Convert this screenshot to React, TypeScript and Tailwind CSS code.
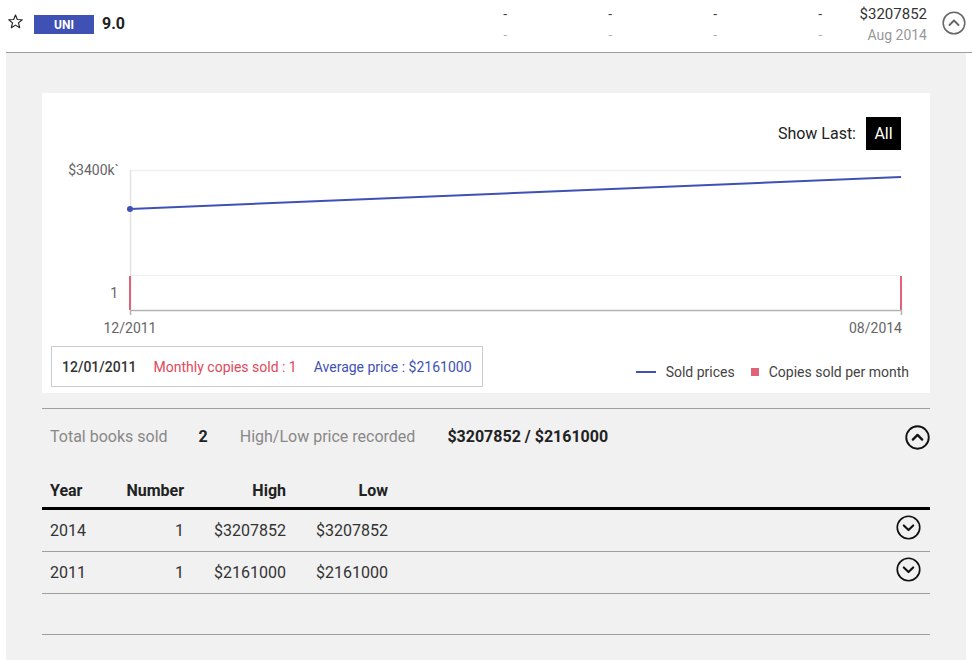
import React from "react";

function CircleChevron({ up, color = "#111", size = 24, stroke = 1.8 }: { up?: boolean; color?: string; size?: number; stroke?: number }) {
  return (
    <svg width={size} height={size} viewBox="0 0 24 24" fill="none">
      <circle cx="12" cy="12" r="10.8" stroke={color} strokeWidth={stroke} />
      {up ? (
        <path d="M7.5 14 L12 9.5 L16.5 14" stroke={color} strokeWidth={stroke + 0.4} strokeLinecap="round" strokeLinejoin="round" />
      ) : (
        <path d="M7.5 10 L12 14.5 L16.5 10" stroke={color} strokeWidth={stroke + 0.4} strokeLinecap="round" strokeLinejoin="round" />
      )}
    </svg>
  );
}

function Star() {
  return (
    <svg width="17" height="17" viewBox="0 0 24 24" fill="none">
      <path
        d="M12 2.8 L14.6 9.2 L21.5 9.6 L16.2 14 L17.9 20.8 L12 17.1 L6.1 20.8 L7.8 14 L2.5 9.6 L9.4 9.2 Z"
        stroke="#222"
        strokeWidth="1.6"
        strokeLinejoin="round"
      />
    </svg>
  );
}

function Chart() {
  return (
    <svg width="888" height="185" viewBox="0 0 888 185" className="block">
      <g fontFamily="Roboto, 'Liberation Sans', sans-serif" fontSize="14" fill="#666">
        <line x1="88" y1="15.5" x2="859" y2="15.5" stroke="#f0f0f0" strokeWidth="1.5" />
        <line x1="88" y1="120.5" x2="859" y2="120.5" stroke="#f0f0f0" strokeWidth="1" />
        <line x1="88.5" y1="15" x2="88.5" y2="155" stroke="#e2e2e2" strokeWidth="1.5" />
        <line x1="88" y1="54" x2="859" y2="22" stroke="#3f51b5" strokeWidth="2" />
        <circle cx="88" cy="54" r="3" fill="#3f51b5" />
        <line x1="88" y1="121" x2="88" y2="155" stroke="#e06377" strokeWidth="2" />
        <line x1="859" y1="121" x2="859" y2="155" stroke="#e06377" strokeWidth="2" />
        <line x1="88" y1="155.5" x2="860" y2="155.5" stroke="#b3b3b3" strokeWidth="1.5" />
        <line x1="88.5" y1="155" x2="88.5" y2="160" stroke="#b3b3b3" strokeWidth="1.5" />
        <line x1="859.5" y1="155" x2="859.5" y2="160" stroke="#b3b3b3" strokeWidth="1.5" />
        <text x="77" y="20" textAnchor="end">$3400k`</text>
        <text x="76" y="143" textAnchor="end">1</text>
        <text x="88" y="178" textAnchor="middle">12/2011</text>
        <text x="860" y="178" textAnchor="end">08/2014</text>
      </g>
    </svg>
  );
}

export default function App() {
  const font = { fontFamily: "Roboto, 'Liberation Sans', sans-serif" };
  return (
    <div className="w-[972px] h-[660px] bg-white overflow-hidden" style={font}>
      <div className="ml-[6px] w-[966px]">
        {/* Header */}
        <div className="h-[53px] flex items-start border-b-[1.5px] border-[#9e9e9e]">
          <div className="pt-[13px] pl-[1px]">
            <Star />
          </div>
          <div className="ml-[10px] mt-[15px] w-[60px] h-[19px] bg-[#3f51b5] text-white text-[12px] font-bold flex items-center justify-center">
            UNI
          </div>
          <div className="ml-[8px] mt-[14px] text-[16px] font-bold text-[#222] leading-[20px]">9.0</div>
          <div className="ml-auto flex pt-[4px]">
            {["-", "-", "-", "-"].map((d, i) => (
              <div key={i} className="w-[105px] text-right">
                <div className="text-[14px] text-[#444] leading-[20px]">{d}</div>
                <div className="text-[13px] text-[#aaa] leading-[22px]">{d}</div>
              </div>
            ))}
            <div className="w-[105px] text-right">
              <div className="text-[15px] text-[#333] leading-[20px]">$3207852</div>
              <div className="text-[14px] text-[#999] leading-[22px]">Aug 2014</div>
            </div>
          </div>
          <div className="ml-[15px] mr-[6px] mt-[11px]">
            <CircleChevron up color="#666" size={24} stroke={1.5} />
          </div>
        </div>

        {/* Gray panel */}
        <div className="w-[960px] h-[607px] bg-[#f1f1f1] pt-[40px] px-[36px]">
          {/* Card */}
          <div className="bg-white h-[300px] flex flex-col">
            <div className="flex justify-end items-center pt-[24px] pr-[29px]">
              <span className="text-[16px] text-[#222] mr-[10px]">Show Last:</span>
              <span className="bg-black text-white text-[16px] w-[35px] h-[33px] flex items-center justify-center">All</span>
            </div>
            <div className="mt-[5px]">
              <Chart />
            </div>
            <div className="flex items-center justify-between pl-[9px] pr-[21px] mt-[6px]">
              <div className="border border-[#cccccc] h-[41px] px-[10px] pt-[1px] flex items-center gap-[17px] text-[14px]">
                <span className="text-[#333] font-medium">12/01/2011</span>
                <span className="text-[#e0495a]">Monthly copies sold : 1</span>
                <span className="text-[#3f51b5]">Average price : $2161000</span>
              </div>
              <div className="flex items-center text-[14px] text-[#444] mt-[11px]">
                <span className="w-[20px] h-[2px] bg-[#3f51b5] mr-[10px]" />
                <span>Sold prices</span>
                <span className="w-[8px] h-[8px] bg-[#e06377] ml-[16px] mr-[10px]" />
                <span>Copies sold per month</span>
              </div>
            </div>
          </div>

          {/* Summary */}
          <div className="mt-[15px] border-t-[1.5px] border-[#9e9e9e] h-[56px] flex items-center px-[8px] pt-[1px] text-[16px]">
            <span className="text-[#888]">Total books sold</span>
            <span className="text-[#222] font-bold ml-[31px]">2</span>
            <span className="text-[#888] ml-[32px]">High/Low price recorded</span>
            <span className="text-[#222] font-bold ml-[32px]">$3207852 / $2161000</span>
            <span className="ml-auto -mr-[8px]">
              <CircleChevron up color="#111" size={25} stroke={1.8} />
            </span>
          </div>

          {/* Table */}
          <div className="text-[16px]">
            <div className="flex items-center h-[46px] border-b-[3px] border-black font-bold text-[#222] px-[8px] pt-[10px]">
              <div className="w-[60px]">Year</div>
              <div className="w-[74px] text-right">Number</div>
              <div className="w-[102px] text-right">High</div>
              <div className="w-[102px] text-right">Low</div>
            </div>
            {[
              ["2014", "1", "$3207852", "$3207852"],
              ["2011", "1", "$2161000", "$2161000"],
            ].map((r, i) => (
              <div key={i} className="flex items-center h-[42px] border-b-[1.5px] border-[#9e9e9e] text-[#333] px-[8px]">
                <div className="w-[60px]">{r[0]}</div>
                <div className="w-[74px] text-right">{r[1]}</div>
                <div className="w-[102px] text-right">{r[2]}</div>
                <div className="w-[102px] text-right">{r[3]}</div>
                <div className="ml-auto -mt-[6px] mr-[1px]">
                  <CircleChevron color="#111" size={25} stroke={1.6} />
                </div>
              </div>
            ))}
            <div className="h-[41px] border-b-[1.5px] border-[#9e9e9e]" />
          </div>
        </div>
      </div>
    </div>
  );
}
